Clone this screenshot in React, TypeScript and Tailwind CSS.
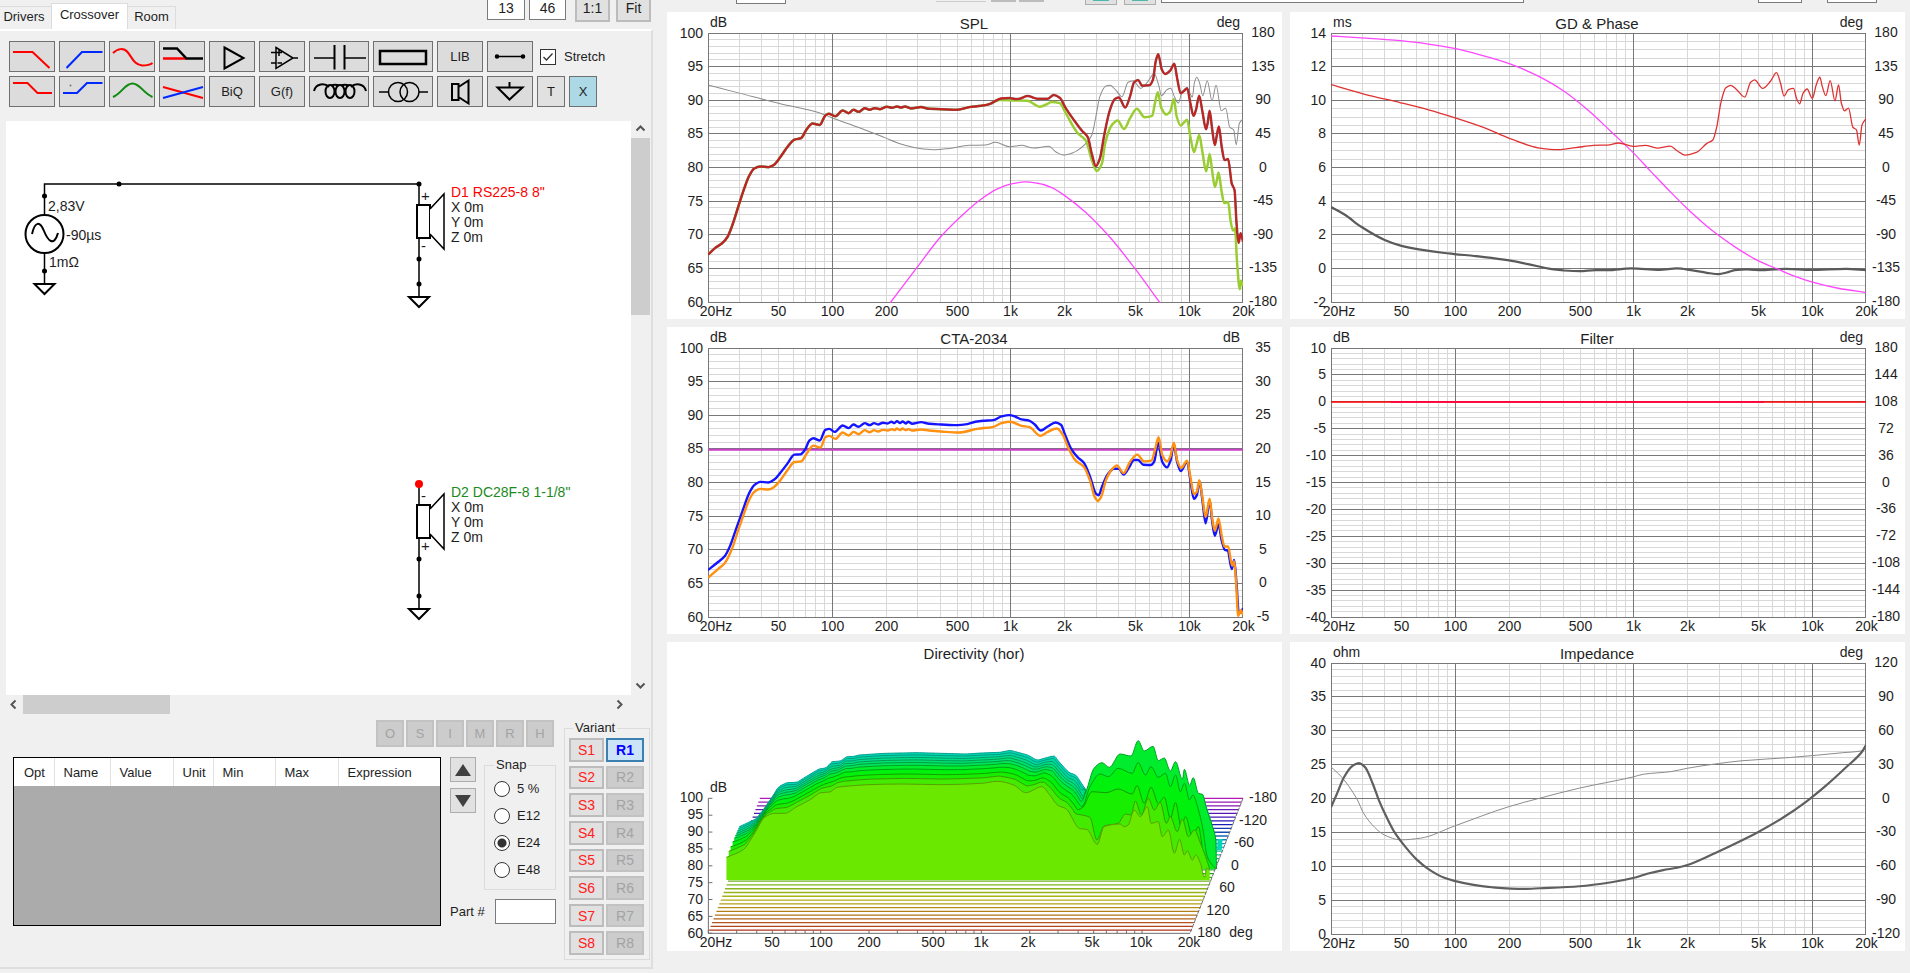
import { ReactNode } from 'react';
import { clsx } from 'clsx';

type Point = [number, number];

const FREQS: [number, string][] = [
  [20, '20Hz'],
  [50, '50'],
  [100, '100'],
  [200, '200'],
  [500, '500'],
  [1000, '1k'],
  [2000, '2k'],
  [5000, '5k'],
  [10000, '10k'],
  [20000, '20k'],
];

const PLOT = { x: 41, y: 21, w: 535 };

const parse = (s: string): Point[] =>
  s.split(' ').map((p) => p.split(',').map(Number) as Point);

// Monotone cubic spline, flat at every peak and dip
function smooth(pts: Point[]) {
  const last = pts.length - 1;
  const delta = pts.slice(1).map((p, i) => (p[1] - pts[i][1]) / (p[0] - pts[i][0]));
  const slope = pts.map((p, i) => {
    if (i === 0) return delta[0];
    if (i === last) return delta[last - 1];
    const d0 = delta[i - 1];
    const d1 = delta[i];
    if (d0 * d1 <= 0) return 0;
    const h0 = p[0] - pts[i - 1][0];
    const h1 = pts[i + 1][0] - p[0];
    const w0 = 2 * h1 + h0;
    const w1 = h1 + 2 * h0;
    return (w0 + w1) / (w0 / d0 + w1 / d1);
  });
  let d = `M${pts[0][0]} ${pts[0][1]}`;
  for (let i = 0; i < last; i++) {
    const [x0, y0] = pts[i];
    const [x1, y1] = pts[i + 1];
    const h = (x1 - x0) / 3;
    d += `C${x0 + h} ${y0 + slope[i] * h} ${x1 - h} ${y1 - slope[i + 1] * h} ${x1} ${y1}`;
  }
  return d;
}

function Trace({ data, color, width = 1 }: { data: string; color: string; width?: number }) {
  return (
    <path
      d={smooth(parse(data))}
      fill="none"
      stroke={color}
      strokeWidth={width}
      strokeLinejoin="round"
      vectorEffect="non-scaling-stroke"
    />
  );
}

function Label({ x, y, anchor = 'middle', children }: { x: number; y: number; anchor?: 'start' | 'middle' | 'end'; children: ReactNode }) {
  return (
    <text x={x} y={y + 4} textAnchor={anchor} className="fill-[#1e1e1e] text-[14px]">
      {children}
    </text>
  );
}

type ChartProps = {
  title: string;
  height?: number;
  units: [string, string];
  left: number[];
  right: number[];
  minor: number;
  traceBox: string;
  children: ReactNode;
};

function Chart({ title, height = 307, units, left, right, minor, traceBox, children }: ChartProps) {
  const plotH = height - 38;
  const bottom = PLOT.y + plotH;
  const rows = left.length - 1;
  const fx = (f: number) => Math.floor(PLOT.x + (PLOT.w * Math.log10(f / 20)) / 3) + 0.5;
  const fy = (i: number) => Math.floor(PLOT.y + (plotH * i) / rows) + 0.5;

  const minors: number[] = [];
  for (const decade of [10, 100, 1000]) {
    for (let k = 2; k < 10; k++) if (decade * k > 20) minors.push(decade * k);
  }

  return (
    <svg viewBox={`0 0 615 ${height}`} className="block w-full bg-white" role="img" aria-label={title}>
      <g stroke="#d8d8d8">
        {minors.map((f) => (
          <line key={f} x1={fx(f)} x2={fx(f)} y1={PLOT.y} y2={bottom} />
        ))}
        {Array.from({ length: rows * minor }, (_, i) => (
          <line key={i} x1={PLOT.x} x2={PLOT.x + PLOT.w} y1={fy(i / minor)} y2={fy(i / minor)} />
        ))}
      </g>
      <g stroke="#787878">
        {left.map((v, i) => (
          <line key={v} x1={PLOT.x} x2={PLOT.x + PLOT.w} y1={fy(i)} y2={fy(i)} />
        ))}
        {[20, 100, 1000, 10000, 19999].map((f) => (
          <line key={f} x1={fx(f)} x2={fx(f)} y1={PLOT.y} y2={bottom + 1} />
        ))}
      </g>
      <svg x={PLOT.x} y={PLOT.y} width={PLOT.w} height={plotH + 1} viewBox={traceBox} preserveAspectRatio="none">
        {children}
      </svg>
      <text x="307" y="17" textAnchor="middle" className="fill-[#1e1e1e] text-[15px]">{title}</text>
      <Label x={43} y={11} anchor="start">{units[0]}</Label>
      <Label x={573} y={11} anchor="end">{units[1]}</Label>
      {left.map((v, i) => (
        <Label key={v} x={36} y={fy(i)} anchor="end">{v}</Label>
      ))}
      {right.map((v, i) => (
        <Label key={v} x={596} y={PLOT.y + (plotH * i) / (right.length - 1)}>{v}</Label>
      ))}
      {FREQS.map(([f, t]) => (
        <Label key={t} x={f === 20 ? 49 : fx(f)} y={bottom + 10}>{t}</Label>
      ))}
    </svg>
  );
}

const range = (from: number, to: number, step: number) =>
  Array.from({ length: Math.round((to - from) / step) + 1 }, (_, i) => from + i * step);

const BASS =
  '120,762 140,740 155,728 168,710 180,676 195,620 210,565 222,528 235,505 250,499 270,501 283,495 300,471 318,440 335,419 352,414 365,389 380,371 398,375 412,347 420,342 437,349 455,332 470,340 482,330 495,336 510,325 522,330 535,325 548,328 565,321 578,324 590,320 600,323 610,320 625,326 650,322 670,327 700,328 740,330 770,322 800,318 820,313';
const SPL_TOTAL =
  BASS +
  ' 850,296 870,295 885,298 895,297 915,289 940,297 965,297 980,286 995,294 1010,325 1030,360 1050,392 1065,412 1075,462 1085,498 1095,475 1105,410 1120,330 1132,298 1142,293 1158,323 1170,290 1180,248 1190,241 1200,258 1218,257 1227,240 1234,185 1240,164 1249,210 1257,223 1270,213 1280,193 1287,235 1296,281 1304,274 1312,266 1320,310 1328,348 1334,330 1342,288 1350,335 1359,388 1363,370 1368,333 1374,385 1381,435 1386,405 1391,380 1398,440 1405,480 1414,477 1423,550 1430,570 1435,670 1440,727 1445,698 1451,722';
const SPL_POWER =
  BASS +
  ' 845,301 880,302 915,303 930,312 945,321 960,315 975,307 995,310 1010,340 1040,400 1060,422 1075,480 1087,512 1100,490 1108,430 1125,375 1139,362 1155,387 1170,355 1187,327 1206,352 1225,348 1232,310 1239,278 1248,325 1260,344 1270,335 1279,298 1286,350 1296,377 1304,368 1312,360 1320,410 1329,456 1336,430 1342,405 1350,455 1359,513 1363,495 1368,462 1374,510 1381,560 1386,540 1390,517 1398,575 1404,608 1414,605 1420,660 1426,690 1431,683 1436,780 1443,865 1446,840 1451,855';
const SPL_PHASE =
  '120,256 200,281 300,312 400,340 425,352 500,385 560,413 600,432 640,444 680,449 720,445 770,436 810,435 835,427 870,440 900,436 930,444 968,439 985,455 1003,465 1030,457 1062,428 1075,405 1085,350 1095,290 1110,259 1120,257 1135,272 1150,291 1165,248 1178,243 1196,266 1215,245 1230,222 1242,260 1248,288 1262,270 1271,266 1280,290 1290,310 1300,275 1312,266 1325,292 1330,250 1336,233 1343,250 1351,288 1362,243 1374,303 1384,257 1397,333 1408,325 1418,382 1428,390 1434,434 1442,370 1451,357';
const SPL_TARGET =
  '573,906 640,800 700,707 760,636 800,596 840,566 875,551 910,545 940,549 975,562 1010,588 1060,636 1120,710 1180,800 1245,906';

const GD_TARGET =
  '115,110 200,116 290,124 360,134 425,147 490,166 563,192 640,232 700,274 760,330 820,396 874,457 920,515 970,577 1011,625 1060,677 1089,704 1140,746 1187,779 1240,806 1280,826 1323,843 1390,862 1460,875';
const GD_PHASE =
  '115,255 200,284 290,309 360,330 425,353 500,383 563,415 610,435 640,444 685,449 730,443 775,436 810,435 838,429 875,439 905,436 935,444 968,438 985,452 1005,465 1035,456 1060,430 1075,420 1085,380 1095,310 1107,265 1120,257 1135,270 1155,292 1170,248 1180,241 1200,266 1220,245 1235,219 1245,250 1254,289 1265,270 1278,266 1285,295 1293,312 1302,280 1312,268 1325,296 1335,255 1344,233 1350,260 1359,288 1370,243 1382,303 1391,256 1398,310 1406,333 1416,325 1427,382 1436,390 1443,435 1450,375 1460,356';
const GD_DELAY =
  '115,620 150,643 190,678 250,718 290,735 340,747 400,757 425,760 500,769 563,779 610,790 670,805 700,809 740,811 780,808 810,808 870,803 940,807 985,803 1020,808 1060,816 1090,820 1110,815 1130,808 1160,806 1200,808 1260,804 1320,807 1410,804 1460,808';

const CTA_ON_AXIS =
  '120,748 145,724 162,706 175,676 190,625 208,565 222,520 235,495 250,485 270,487 285,478 300,458 318,430 335,404 350,403 362,388 372,362 382,355 398,362 412,330 422,327 435,336 455,317 470,325 482,314 495,321 510,310 522,316 533,310 543,314 555,309 567,311 576,306 584,310 590,304 598,310 604,305 612,311 618,306 628,312 650,307 670,312 700,314 740,316 765,313 785,306 805,303 830,301 850,290 870,286 885,291 900,299 920,303 933,314 948,332 965,320 985,308 998,315 1010,350 1025,390 1040,412 1055,428 1070,468 1085,520 1092,525 1100,500 1115,462 1130,446 1142,446 1154,463 1167,443 1180,420 1190,420 1203,434 1222,435 1230,425 1240,368 1250,425 1262,442 1271,420 1279,372 1287,425 1296,453 1312,425 1320,480 1329,536 1336,525 1343,483 1350,540 1358,609 1368,540 1374,600 1381,646 1390,612 1398,660 1406,688 1413,690 1423,745 1429,718 1435,790 1440,870 1446,875 1451,862';
const CTA_WINDOW =
  '120,771 145,745 162,727 178,690 195,630 210,578 222,540 235,515 250,506 270,508 285,500 300,480 318,450 335,426 352,424 367,398 382,377 400,383 412,352 422,348 437,357 455,338 470,347 482,336 495,343 510,331 522,337 533,331 543,335 555,330 567,332 578,328 584,331 590,326 598,331 604,326 612,331 618,328 628,332 650,329 670,332 700,335 745,338 790,327 830,321 850,310 872,306 900,318 920,322 947,348 965,336 988,326 1003,345 1015,380 1035,422 1055,440 1070,480 1082,530 1090,542 1098,530 1110,480 1125,448 1137,436 1154,459 1170,425 1188,404 1205,424 1223,422 1232,390 1241,352 1250,405 1262,424 1270,410 1279,368 1287,420 1297,444 1312,422 1320,470 1329,522 1336,515 1342,480 1350,530 1358,590 1368,535 1374,590 1381,631 1390,594 1398,645 1405,678 1414,678 1424,735 1429,722 1434,790 1439,885 1446,868 1451,882';

const Z_MAGNITUDE =
  '115,500 130,460 148,410 168,378 185,369 200,380 220,430 235,478 255,530 275,575 300,615 330,655 360,684 400,710 425,719 470,730 520,738 600,743 640,741 740,735 820,723 880,709 910,698 950,687 985,680 1011,672 1080,637 1146,600 1187,575 1250,532 1310,483 1360,435 1410,381 1450,335 1460,315';
const Z_PHASE =
  '115,380 140,408 180,475 197,518 225,560 250,583 290,597 340,592 425,556 563,498 640,473 740,443 874,410 900,402 970,394 1011,384 1089,370 1146,362 1270,352 1400,338 1450,332 1460,325';

// Directivity waterfall: back ridge, front ridge, and the slices between them
const RIDGE_BACK = parse(
  '197,560 238,537 255,512 275,478 295,440 315,428 340,427 370,405 395,387 412,384 428,365 450,363 465,349 480,350 495,345 520,343 560,340 640,338 760,342 800,339 845,337 872,331 915,345 938,361 980,347 1000,375 1018,398 1035,405 1060,450',
);
const RIDGE_FRONT = parse(
  '165,652 208,628 225,600 240,570 260,532 285,520 310,520 340,500 375,478 400,458 422,456 440,442 470,438 520,434 600,432 700,434 800,430 840,424 880,435 910,458 950,440 970,465 990,496 1010,506 1045,566 1062,568 1088,613 1105,560 1145,552 1155,560 1165,555 1180,510 1195,530 1213,500 1222,550 1240,545 1250,590 1265,570 1280,640 1293,598 1305,645 1312,632 1325,660 1333,645 1345,670 1355,712 1360,685 1368,690',
);

const SLICES = [
  { t: 0, fill: '#00d8b8', line: '#00a08c', tail: '' },
  { t: 0.07, fill: '#00d8a4', line: '#009c78', tail: '' },
  { t: 0.15, fill: '#00dc8c', line: '#009c64', tail: '' },
  { t: 0.23, fill: '#00e074', line: '#009c50', tail: '' },
  { t: 0.31, fill: '#00e45c', line: '#009c3c', tail: '' },
  {
    t: 0.4,
    fill: '#00ec2c',
    line: '#00a028',
    tail: '1060,455 1080,385 1100,368 1118,382 1145,342 1172,348 1190,302 1205,333 1227,319 1240,362 1255,354 1270,393 1283,365 1300,418 1305,388 1318,436 1327,413 1340,460 1350,463 1360,505 1375,560 1383,600 1385,687',
  },
  {
    t: 0.52,
    fill: '#00f20c',
    line: '#00a014',
    tail: '1050,500 1070,440 1095,402 1116,410 1140,385 1175,400 1190,368 1208,405 1222,380 1240,412 1258,400 1270,440 1283,405 1295,455 1305,430 1318,480 1326,465 1340,510 1350,560 1362,650 1383,687',
  },
  {
    t: 0.68,
    fill: '#18ee00',
    line: '#149c00',
    tail: '1052,502 1075,455 1110,458 1140,447 1175,462 1187,437 1205,490 1222,442 1240,490 1255,472 1270,535 1283,488 1297,560 1308,530 1325,590 1340,560 1352,640 1364,687',
  },
  {
    t: 0.82,
    fill: '#44ea00',
    line: '#389c00',
    tail: '1050,525 1070,532 1087,600 1105,558 1140,550 1158,522 1172,525 1183,483 1198,525 1215,475 1230,510 1245,487 1260,550 1270,530 1287,575 1300,537 1315,590 1330,570 1345,610 1358,650 1368,687',
  },
];

function heightAt(pts: Point[], x: number) {
  const i = pts.findIndex((p) => p[0] >= x);
  if (i < 0) return pts[pts.length - 1][1];
  if (i === 0) return pts[0][1];
  const [x0, y0] = pts[i - 1];
  const [x1, y1] = pts[i];
  return y0 + ((y1 - y0) * (x - x0)) / (x1 - x0);
}

function slicePath(t: number, tail: string) {
  const start = 197 - 32 * t;
  const body: Point[] = [];
  // the ridges shift left and down as they come forward
  for (let x = 0; x <= 870; x += 8) {
    const px = start + x;
    const back = heightAt(RIDGE_BACK, px + 10 * t);
    const front = heightAt(RIDGE_FRONT, Math.max(165, px - 14 * (1 - t)));
    body.push([px, back + (front - back) * t]);
  }
  const end: Point[] = tail ? parse(tail) : [[1060, 450]];
  return smooth([...body.filter((p) => p[0] < end[0][0] - 4), ...end]);
}

const floorColor = (i: number) => {
  const hue = i < 22 ? 300 - i * 9 : 88 - (i - 22) * 6;
  return `hsl(${hue} 75% 40%)`;
};

const DIR_FREQS: [number, string][] = [
  [49, '20Hz'], [105, '50'], [154, '100'], [202, '200'], [266, '500'],
  [314, '1k'], [361, '2k'], [425, '5k'], [474, '10k'], [522, '20k'],
];
const DIR_ANGLES: [number, string][] = [
  [596, '-180'], [586, '-120'], [577, '-60'], [568, '0'], [560, '60'], [551, '120'], [542, '180'],
];

function Directivity() {
  return (
    <svg viewBox="0 0 615 309" className="block w-full bg-white" role="img" aria-label="Directivity (hor)">
      <svg width="615" height="309" viewBox="17 6 1531 927" preserveAspectRatio="none">
        {range(0, 35, 1).map((i) => (
          <line
            key={i}
            x1={248 - i * 3.6}
            x2={1451 - i * 3.67}
            y1={475 + i * 11.3}
            y2={475 + i * 11.3}
            stroke={floorColor(i)}
            strokeWidth="1.3"
            vectorEffect="non-scaling-stroke"
          />
        ))}
        <path d="M1388 597h12l-2 34h-12z" fill="#00d8b8" />
        <path d="M1340 462L1350 463L1366 520L1385 600V640H1340z" fill="#00c8a0" />
        {SLICES.map(({ t, fill, line, tail }) => {
          const d = slicePath(t, tail);
          return (
            <g key={t}>
              <path d={`${d}V687H${197 - 32 * t}Z`} fill={fill} />
              <path d={d} fill="none" stroke={line} vectorEffect="non-scaling-stroke" />
            </g>
          );
        })}
        <path d={`${smooth(RIDGE_FRONT)}V720H165Z`} fill="#6ae800" />
        <path d={smooth(RIDGE_FRONT)} fill="none" stroke="#58a000" vectorEffect="non-scaling-stroke" />
        <g stroke="#6e6e6e" fill="none">
          <path d="M130 475H120V880H1319" vectorEffect="non-scaling-stroke" />
          <path d="M1451 475L1319 880" strokeDasharray="4 1" vectorEffect="non-scaling-stroke" />
          {range(1, 8, 1).map((i) => (
            <path key={i} d={`M120 ${475 + i * 50.6}h10`} vectorEffect="non-scaling-stroke" />
          ))}
          {[20, 200, 2000].flatMap((base) =>
            [1, 1.5, 2, 2.5, 3, 3.5, 4, 4.5, 5].map((k) => (
              <path
                key={base * k}
                d={`M${120 + 400 * Math.log10((base * k) / 20)} 880v-10`}
                vectorEffect="non-scaling-stroke"
              />
            )),
          )}
        </g>
      </svg>
      <text x="307" y="17" textAnchor="middle" className="fill-[#1e1e1e] text-[15px]">Directivity (hor)</text>
      <Label x={43} y={146} anchor="start">dB</Label>
      {range(0, 8, 1).map((i) => (
        <Label key={i} x={36} y={156 + i * 17} anchor="end">{100 - i * 5}</Label>
      ))}
      {DIR_FREQS.map(([x, t]) => (
        <Label key={t} x={x} y={301}>{t}</Label>
      ))}
      {DIR_ANGLES.map(([x, t], i) => (
        <Label key={t} x={x} y={156 + i * 22.5}>{t}</Label>
      ))}
      <Label x={574} y={291}>deg</Label>
    </svg>
  );
}

// ---------- Toolbar ----------

const red = '#ff0000';
const blue = '#0028ff';

function Tool({ label, wide, children }: { label: string; wide?: boolean; children: ReactNode }) {
  return (
    <button
      type="button"
      aria-label={label}
      className={clsx(
        'flex h-[31px] shrink-0 items-center justify-center border border-[#707070] bg-[#dcdcdc]',
        wide ? 'w-[60px]' : 'w-[46px]',
      )}
    >
      <svg
        width={wide ? 60 : 46}
        height="31"
        viewBox={wide ? '0 0 60 31' : '0 0 46 31'}
        fill="none"
        stroke="#000"
        strokeWidth="1.5"
        className="shrink-0"
      >
        {children}
      </svg>
    </button>
  );
}

function TextTool({ children, className }: { children: string; className: string }) {
  return (
    <button type="button" className={clsx('h-[31px] shrink-0 border border-[#707070]', className)}>
      {children}
    </button>
  );
}

function Toolbar() {
  return (
    <div className="flex flex-col gap-1 pt-[10px] pl-[9px]">
      <div className="flex items-center gap-1">
        <Tool label="Low pass"><path d="M4 11H23.5L40.5 27" stroke={red} strokeWidth="2" /></Tool>
        <Tool label="High pass"><path d="M7.5 27L23 11H43.5" stroke={blue} strokeWidth="2" /></Tool>
        <Tool label="All pass"><path d="M4 12C9 7 15 7 18.5 11C23 16 25 24 33 24.5C37 24.5 41 24 43.5 22" stroke={red} strokeWidth="2" /></Tool>
        <Tool label="Shelf">
          <path d="M4 17.5H27.5" stroke={red} strokeWidth="2.5" />
          <path d="M4 7.5H18L27.5 17.5H44" strokeWidth="2.5" />
        </Tool>
        <Tool label="Buffer"><path d="M15.5 6.500L34.5 17L15.5 27.5Z" strokeWidth="2" /></Tool>
        <Tool label="Op-amp">
          <path d="M17 6.5L34 17L17 27.5ZM34 17H39M12 11.5H23M20 8.5V15M12 22H17M18.5 22H23" />
        </Tool>
        <Tool label="Capacitor" wide>
          <path d="M5 17H25M36 17H57" />
          <path d="M25.5 4V28.5M35.5 4V28.5" strokeWidth="2" />
        </Tool>
        <Tool label="Resistor" wide><rect x="7" y="10" width="46" height="13" strokeWidth="2.5" /></Tool>
        <TextTool className="w-[46px] bg-[#dcdcdc]">LIB</TextTool>
        <Tool label="Wire">
          <path d="M10 15.5H36" />
          <circle cx="10" cy="15.5" r="1.5" fill="#000" />
          <circle cx="36" cy="15.5" r="1.5" fill="#000" />
        </Tool>
        <label className="ml-[3px] flex items-center gap-2">
          <input type="checkbox" defaultChecked className="sr-only" />
          <span className="flex size-4 items-center justify-center border border-[#333] bg-white">
            <svg width="12" height="12" viewBox="0 0 12 12" fill="none" stroke="#333" strokeWidth="1.3">
              <path d="M1.5 6L4.5 9L10.5 2.5" />
            </svg>
          </span>
          Stretch
        </label>
      </div>
      <div className="flex items-center gap-1">
        <Tool label="Low shelf"><path d="M4 7H18.5L28.5 17H43" stroke={red} strokeWidth="2" /></Tool>
        <Tool label="High shelf">
          <path d="M4 17H18L28 7H43.5" stroke={blue} strokeWidth="2" />
          <circle cx="11.5" cy="9.5" r="1" fill="#777" stroke="none" />
        </Tool>
        <Tool label="Peak"><path d="M4 21C13 17 16 7.5 23.5 7.5S34 17 43.5 21" stroke="#0f8a0f" strokeWidth="2" /></Tool>
        <Tool label="Crossing">
          <path d="M4 11L44 22" stroke={red} strokeWidth="2" />
          <path d="M4 22L44 11" stroke={blue} strokeWidth="2" />
        </Tool>
        <TextTool className="w-[46px] bg-[#dcdcdc]">BiQ</TextTool>
        <TextTool className="w-[46px] bg-[#dcdcdc]">G(f)</TextTool>
        <Tool label="Inductor" wide>
          <g strokeWidth="2">
            <path d="M5 15C7 7 16 7 20 11M57 15C55 7 46 7 42 11" />
            <ellipse cx="21" cy="15.5" rx="4.500" ry="6.5" />
            <ellipse cx="31" cy="15.5" rx="4.500" ry="6.5" />
            <ellipse cx="41" cy="15.5" rx="4.500" ry="6.5" />
            <path d="M22 9.500Q26 8 30 9.500M32 9.500Q36 8 40 9.500" />
          </g>
        </Tool>
        <Tool label="Transformer" wide>
          <path d="M6 16H15.5M46 16H55" />
          <circle cx="25" cy="16" r="9.5" />
          <circle cx="36.5" cy="16" r="9.5" />
        </Tool>
        <Tool label="Driver">
          <path d="M15 8H21.5V24H15ZM21.5 11L31.5 4.5V27.5L21.5 21" strokeWidth="2" />
        </Tool>
        <Tool label="Ground"><path d="M22.5 6V11M10.5 11.5H35.5L22.5 23.5Z" strokeWidth="2" /></Tool>
        <TextTool className="w-7 bg-[#e1e1e1]">T</TextTool>
        <TextTool className="w-7 bg-[#add8e6]">X</TextTool>
      </div>
    </div>
  );
}

// ---------- Schematic ----------

function Ground({ x, y }: { x: number; y: number }) {
  return <path d={`M${x - 10} ${y}h20l-10 10z`} fill="#fff" stroke="#000" strokeWidth="2" />;
}

function Dot({ x, y }: { x: number; y: number }) {
  return <circle cx={x} cy={y} r="2.5" fill="#000" />;
}

function Driver({ y, name, color, top, bottom }: { y: number; name: string; color: string; top: string; bottom: string }) {
  return (
    <g>
      <g fill="#fff" stroke="#000" strokeWidth="2">
        <rect x="411" y={y} width="13" height="33" />
        <path d={`M424 ${y + 4}L438 ${y - 11}V${y + 44}L424 ${y + 29}`} strokeWidth="1.5" />
      </g>
      <text x="415" y={y - 4} className="text-[15px]">{top}</text>
      <text x="415" y={y + 46} className="text-[15px]">{bottom}</text>
      <text x="445" y={y - 8} fill={color}>{name}</text>
      {['X 0m', 'Y 0m', 'Z 0m'].map((t, i) => (
        <text key={t} x="445" y={y + 7 + i * 15}>{t}</text>
      ))}
    </g>
  );
}

function Schematic() {
  return (
    <svg className="h-full w-full text-[14px]" fill="#1e1e1e" role="img" aria-label="Schematic">
      <g stroke="#000" strokeWidth="1.5" fill="none">
        <path d="M38.5 94V63H413V84M38.5 132V162M413 117V175M413 363V384M413 417V487" />
        <circle cx="38.5" cy="113" r="19" strokeWidth="2" />
        <path d="M26 113C29 100 34 100 38 110S48 126 52 112" strokeWidth="2" />
      </g>
      <Dot x={38.5} y={75} />
      <Dot x={38.5} y={150} />
      <Dot x={113} y={63} />
      <Dot x={413} y={63} />
      <Dot x={413} y={138} />
      <Dot x={413} y={163} />
      <Dot x={413} y={438} />
      <Dot x={413} y={475} />
      <circle cx="413" cy="363" r="4" fill="#ff0000" />
      <Ground x={38.5} y={163} />
      <Ground x={413} y={176} />
      <Ground x={413} y={488} />
      <text x="42" y="90">2,83V</text>
      <text x="60" y="119">-90µs</text>
      <text x="43" y="146">1mΩ</text>
      <Driver y={84} name={'D1 RS225-8 8"'} color="#ff0000" top="+" bottom="-" />
      <Driver y={384} name={'D2 DC28F-8 1-1/8"'} color="#1c8a1c" top="-" bottom="+" />
    </svg>
  );
}

function Chevron({ d, label }: { d: string; label: string }) {
  return (
    <button type="button" aria-label={label} className="flex size-[19px] shrink-0 items-center justify-center">
      <svg width="11" height="11" viewBox="0 0 11 11" fill="none" stroke="#555" strokeWidth="2">
        <path d={d} />
      </svg>
    </button>
  );
}

// ---------- Parts and variants ----------

const COLUMNS = [
  ['Opt', 'w-[40px] pl-[10px]'],
  ['Name', 'w-[56px] pl-[9px]'],
  ['Value', 'w-[63px] pl-[9px]'],
  ['Unit', 'w-[40px] pl-[9px]'],
  ['Min', 'w-[62px] pl-[9px]'],
  ['Max', 'w-[63px] pl-[9px]'],
  ['Expression', 'pl-[9px]'],
];

function Parts() {
  return (
    <div className="flex flex-1 flex-col gap-[10px] pt-[6px]">
      <div className="flex justify-end gap-[2px] pr-[2px]">
        {['O', 'S', 'I', 'M', 'R', 'H'].map((t) => (
          <button key={t} type="button" disabled className="h-[27px] w-7 border-2 border-[#c2c2c2] bg-[#cccccc] text-[#a3a3a3]">
            {t}
          </button>
        ))}
      </div>
      <div className="flex gap-[9px]">
        <div className="h-[169px] flex-1 border border-black bg-[#ababab]">
          <table className="w-full table-fixed border-collapse bg-white text-left">
            <thead>
              <tr className="h-7">
                {COLUMNS.map(([name, cls]) => (
                  <th key={name} className={clsx('border-r border-[#e2e2e2] pt-[2px] font-normal last:border-r-0', cls)}>
                    {name}
                  </th>
                ))}
              </tr>
            </thead>
          </table>
        </div>
        <div className="flex w-[106px] flex-col justify-between pb-[2px]">
          <div className="flex gap-2">
            <div className="flex flex-col gap-[6px]">
              <button type="button" aria-label="Move up" className="flex h-[25px] w-[26px] items-center justify-center border border-[#adadad] bg-[#e1e1e1]">
                <svg width="16" height="12" fill="#404040"><path d="M8 0L16 12H0z" /></svg>
              </button>
              <button type="button" aria-label="Move down" className="flex h-[25px] w-[26px] items-center justify-center border border-[#adadad] bg-[#e1e1e1]">
                <svg width="16" height="12" fill="#404040"><path d="M8 12L16 0H0z" /></svg>
              </button>
            </div>
            <fieldset className="h-[133px] w-[72px] border border-[#dcdcdc] pl-[9px]">
              <legend className="px-[2px] leading-4">Snap</legend>
              <div className="flex flex-col gap-[11px] pt-2">
                {['5 %', 'E12', 'E24', 'E48'].map((t) => (
                  <label key={t} className="flex h-4 items-center gap-[7px]">
                    <input
                      type="radio"
                      name="snap"
                      defaultChecked={t === 'E24'}
                      className="size-4 appearance-none rounded-full border border-[#333] bg-white checked:bg-[radial-gradient(circle,#333_0_4px,#fff_5px)]"
                    />
                    {t}
                  </label>
                ))}
              </div>
            </fieldset>
          </div>
          <label className="flex items-center justify-between whitespace-nowrap">
            Part #
            <input type="text" className="h-[25px] w-[61px] border border-[#7a7a7a] bg-white" />
          </label>
        </div>
      </div>
    </div>
  );
}

function Variants() {
  return (
    <fieldset className="mt-[6px] h-[240px] w-[86px] border border-[#dcdcdc] px-1">
      <legend className="ml-1 px-[2px] leading-4">Variant</legend>
      <div className="grid h-[219px] grid-cols-[35px_38px] grid-rows-8 gap-x-[2px] gap-y-1 pt-[2px]">
        {range(1, 8, 1).flatMap((n) => [
          <button key={`s${n}`} type="button" className="border-2 border-[#bcbcbc] bg-[#e1e1e1] text-[14px] leading-4 text-[#ff2020]">
            S{n}
          </button>,
          <button
            key={`r${n}`}
            type="button"
            disabled={n > 1}
            className={clsx(
              'text-[14px] leading-4',
              n === 1
                ? 'border-2 border-[#3c7fb1] bg-[#cce4f7] font-bold text-[#0000ff]'
                : 'border-2 border-[#c2c2c2] bg-[#cccccc] text-[#a3a3a3]',
            )}
          >
            R{n}
          </button>,
        ])}
      </div>
    </fieldset>
  );
}

function Tabs() {
  return (
    <div className="flex h-[29px] justify-between pr-[2px]">
      <div className="flex items-end">
        <button type="button" className="h-[23px] w-[51px] border-t border-[#dcdcdc] pr-[3px] pb-[2px]">Drivers</button>
        <button type="button" className="h-[26px] w-[77px] border border-b-0 border-[#dcdcdc] bg-white pb-1">Crossover</button>
        <button type="button" className="h-[23px] w-[48px] border border-b-0 border-l-0 border-[#dcdcdc] pb-[2px]">Room</button>
      </div>
      <div className="flex items-start">
        <button type="button" className="h-5 w-[38px] border border-t-0 border-[#7a7a7a] bg-white pb-1 text-[14px] leading-4">13</button>
        <button type="button" className="ml-1 h-5 w-[37px] border border-t-0 border-[#7a7a7a] bg-white pb-1 text-[14px] leading-4">46</button>
        <button type="button" className="ml-[9px] h-[22px] w-[35px] border-2 border-t-0 border-[#bcbcbc] bg-[#e1e1e1] pb-1 text-[14px] leading-4">1:1</button>
        <button type="button" className="ml-[6px] h-[22px] w-[35px] border-2 border-t-0 border-[#bcbcbc] bg-[#e1e1e1] pb-1 text-[14px] leading-4">Fit</button>
      </div>
    </div>
  );
}

function Dock() {
  return (
    <div className="flex flex-col pr-[14px] pb-1">
      <Tabs />
      <div className="flex flex-1 flex-col border-t-2 border-r-2 border-b-2 border-t-white border-r-[#dedede] border-b-[#dedede]">
        <Toolbar />
        <div className="mt-[10px] flex min-h-[520px] flex-1 pr-[1px] pl-[6px]">
          <div className="mt-1 min-w-0 flex-1 bg-white">
            <Schematic />
          </div>
          <div className="flex w-[19px] flex-col pt-[2px]">
            <Chevron label="Scroll up" d="M1.5 7.5L5.5 3.5L9.5 7.5" />
            <div className="h-[177px] bg-[#cdcdcd]" />
            <div className="flex-1" />
            <Chevron label="Scroll down" d="M1.5 3.5L5.5 7.5L9.5 3.5" />
          </div>
        </div>
        <div className="flex h-[19px] pr-[22px] pl-1">
          <Chevron label="Scroll left" d="M7.5 1.5L3.5 5.5L7.5 9.5" />
          <div className="w-[147px] bg-[#cdcdcd]" />
          <div className="flex-1" />
          <Chevron label="Scroll right" d="M3.5 1.5L7.5 5.5L3.5 9.5" />
        </div>
        <div className="flex gap-2 pr-[1px] pb-[7px] pl-[13px]">
          <Parts />
          <Variants />
        </div>
      </div>
    </div>
  );
}

// Lower edge of the graph toolbar, scrolled out of view
function GraphBar() {
  return (
    <div className="flex h-3 items-start pr-[33px] pl-[69px]">
      <div className="h-1 w-[50px] border border-t-0 border-[#7a7a7a] bg-white" />
      <div className="ml-[150px] h-[2px] w-[50px] border-b border-[#cccccc]" />
      <div className="ml-[5px] h-[2px] w-[25px] bg-[#bcbcbc]" />
      <div className="ml-[3px] h-[2px] w-[25px] bg-[#bcbcbc]" />
      <div className="ml-[41px] flex h-[5px] w-8 justify-center border border-t-0 border-[#adadad] bg-[#e1e1e1]">
        <div className="h-px w-4 bg-[#50b8a8]" />
      </div>
      <div className="ml-[7px] flex h-[5px] w-8 justify-center border border-t-0 border-[#adadad] bg-[#e1e1e1]">
        <div className="h-px w-4 bg-[#50b8a8]" />
      </div>
      <div className="ml-[5px] h-[3px] w-[363px] border border-t-0 border-[#7a7a7a] bg-white" />
      <div className="ml-auto h-[3px] w-11 border border-t-0 border-[#7a7a7a] bg-white" />
      <div className="ml-[25px] h-[3px] w-[50px] border border-t-0 border-[#7a7a7a] bg-white" />
    </div>
  );
}

export default function App() {
  return (
    <main className="grid min-h-screen grid-cols-[667fr_1243fr] bg-[#f0f0f0] font-['Liberation_Sans',Arial,sans-serif] text-[13px] text-[#1e1e1e]">
      <Dock />
      <div>
        <GraphBar />
        <div className="grid grid-cols-2 gap-2 pr-[5px]">
          <Chart title="SPL" units={['dB', 'deg']} left={range(100, 60, -5)} right={range(180, -180, -45)} minor={5} traceBox="120 101 1331 805">
            <Trace data={SPL_PHASE} color="#8c8c8c" />
            <Trace data={SPL_TARGET} color="#ff46ff" width={1.3} />
            <Trace data={SPL_POWER} color="#9acd32" width={2.5} />
            <Trace data={SPL_TOTAL} color="#8c5050" width={2.5} />
            <Trace data={SPL_TOTAL} color="#c81e1e" width={1.6} />
          </Chart>
          <Chart title="GD & Phase" units={['ms', 'deg']} left={range(14, -2, -2)} right={range(180, -180, -45)} minor={4} traceBox="115 101 1345 805">
            <Trace data={GD_DELAY} color="#5a5a5a" width={2.2} />
            <Trace data={GD_TARGET} color="#ff46ff" width={1.3} />
            <Trace data={GD_PHASE} color="#e03232" width={1.3} />
          </Chart>
          <Chart title="CTA-2034" units={['dB', 'dB']} left={range(100, 60, -5)} right={range(35, -5, -5)} minor={5} traceBox="120 86 1331 805">
            <Trace data="120,389 1451,389" color="#c840c8" width={2} />
            <Trace data={CTA_ON_AXIS} color="#1414ff" width={2.4} />
            <Trace data={CTA_WINDOW} color="#ff9010" width={2.4} />
          </Chart>
          <Chart title="Filter" units={['dB', 'deg']} left={range(10, -40, -5)} right={range(180, -180, -36)} minor={5} traceBox="115 86 1345 805">
            <Trace data="115,247 1460,247" color="#ff0000" width={1.5} />
            <Trace data="265,247 1203,247" color="#ff0046" width={1.5} />
          </Chart>
          <Directivity />
          <Chart title="Impedance" height={309} units={['ohm', 'deg']} left={range(40, 0, -5)} right={range(120, -120, -30)} minor={5} traceBox="115 71 1345 809">
            <Trace data={Z_PHASE} color="#8c8c8c" />
            <Trace data={Z_MAGNITUDE} color="#5f5f5f" width={2.2} />
          </Chart>
        </div>
      </div>
    </main>
  );
}
